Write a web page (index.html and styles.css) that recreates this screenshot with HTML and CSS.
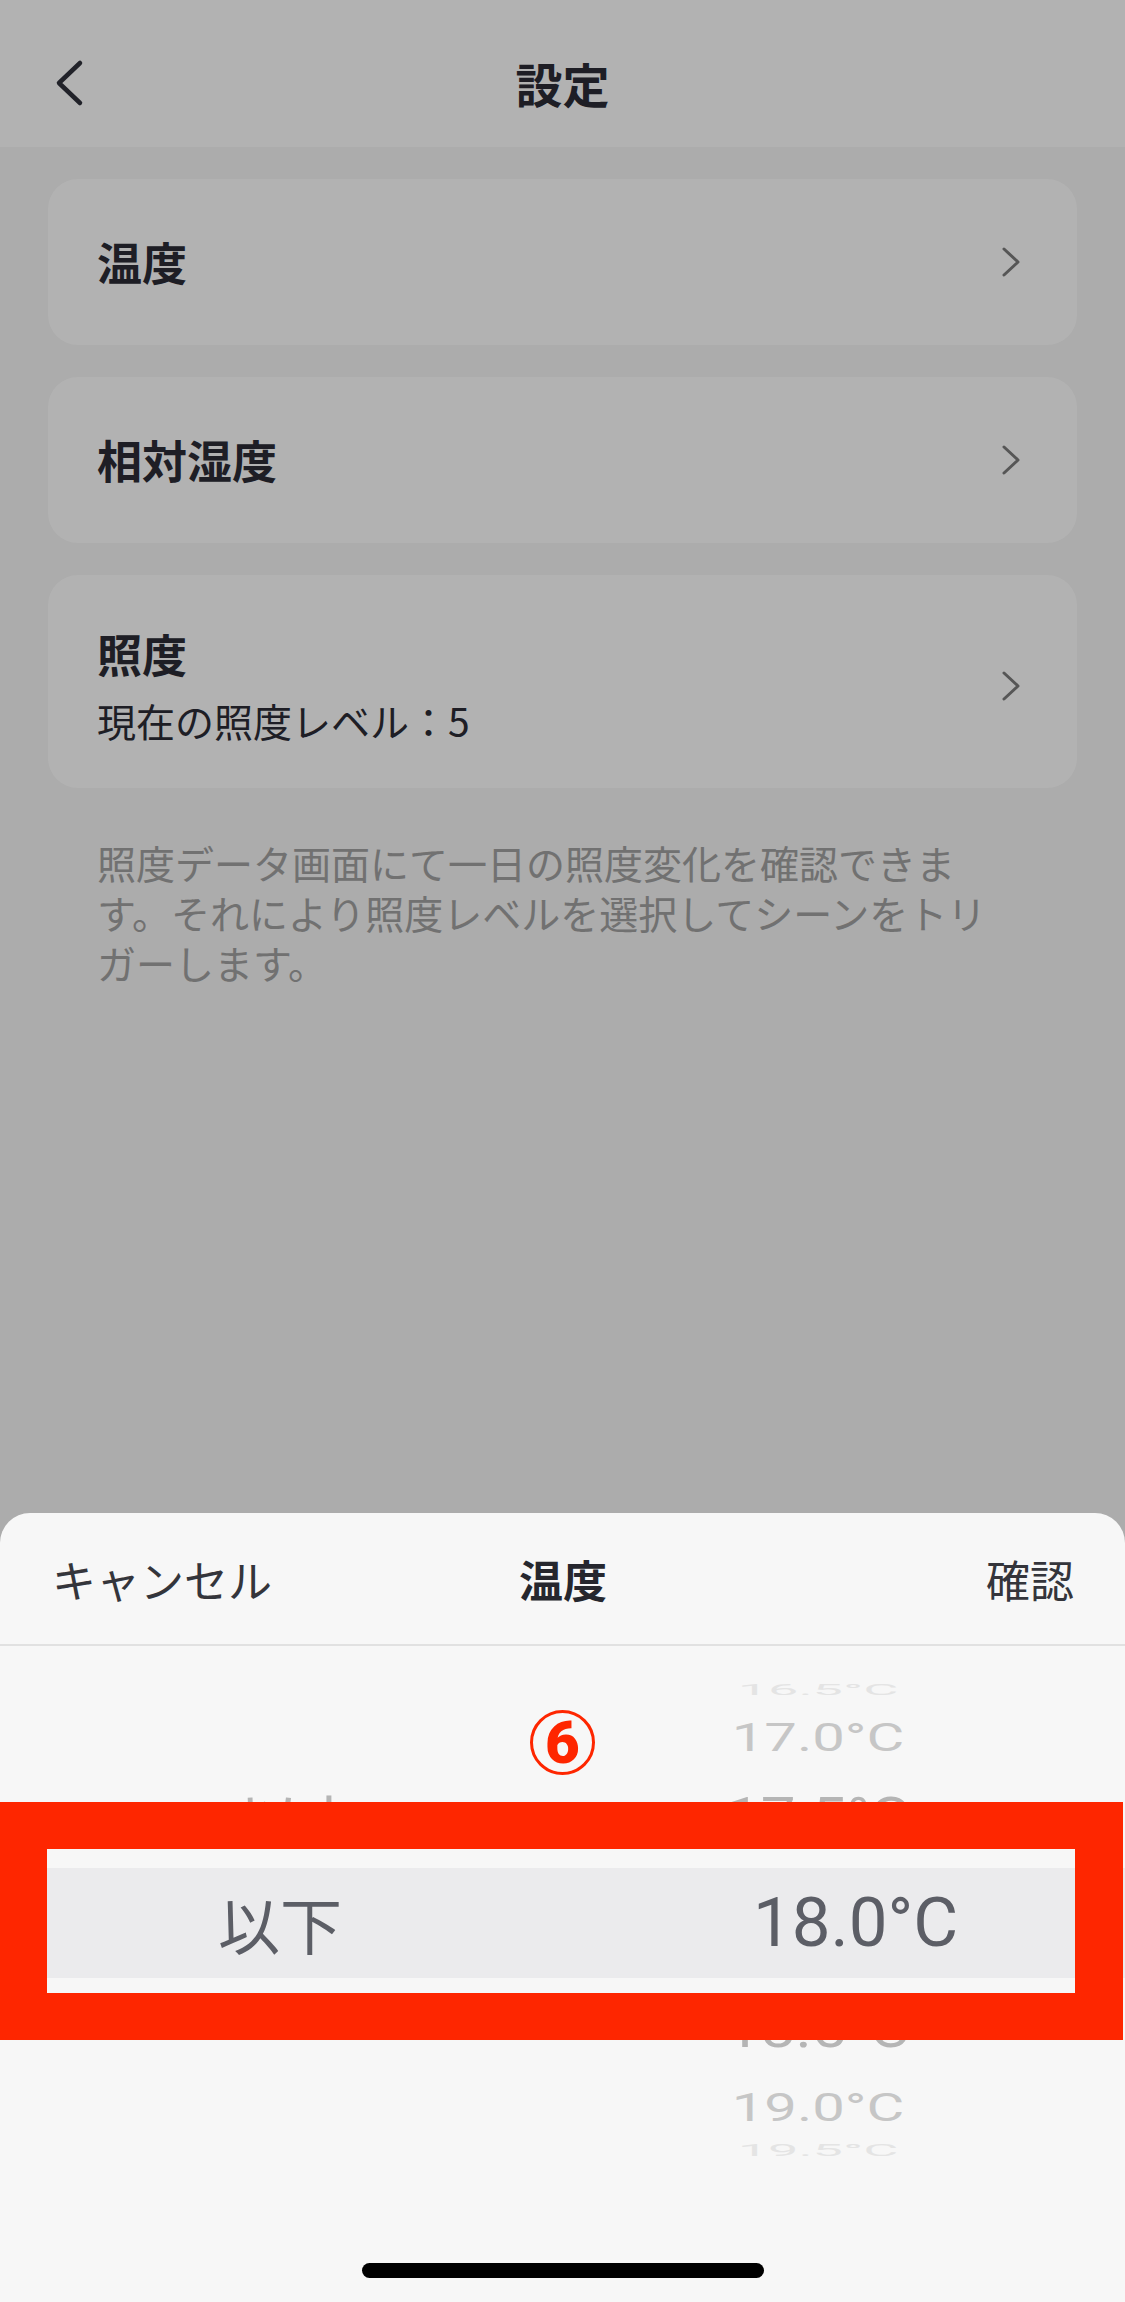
FILE: index.html
```html
<!DOCTYPE html>
<html lang="ja">
<head>
<meta charset="UTF-8">
<meta name="viewport" content="width=device-width, initial-scale=1.0">
<title>設定</title>
<link rel="stylesheet" href="styles.css">
</head>
<body>

<header class="nav">
    <div class="nav-left">
        <svg class="back" width="32" height="48" viewBox="0 0 32 48">
            <polyline points="25,4 4,24 25,44" />
        </svg>
    </div>
    <h1>設定</h1>
    <div></div>
</header>

<div class="container">

    <div class="card">
        <div class="card-text">
            <div class="card-title">温度</div>
        </div>
        <svg class="arrow" width="22" height="32" viewBox="0 0 22 32">
            <polyline points="4,3 18,16 4,29" />
        </svg>
    </div>

    <div class="card">
        <div class="card-text">
            <div class="card-title">相対湿度</div>
        </div>
        <svg class="arrow" width="22" height="32" viewBox="0 0 22 32">
            <polyline points="4,3 18,16 4,29" />
        </svg>
    </div>

    <div class="card tall">
        <div class="card-text">
            <div class="card-title">照度</div>
            <div class="card-sub">現在の照度レベル：5</div>
        </div>
        <svg class="arrow" width="22" height="32" viewBox="0 0 22 32">
            <polyline points="4,3 18,16 4,29" />
        </svg>
    </div>

    <p class="desc">照度データ画面にて一日の照度変化を確認できます。それにより照度レベルを選択してシーンをトリガーします。</p>

</div>

<div class="mask"></div>

<div class="sheet">
    <div class="sheet-head">
        <span class="cancel">キャンセル</span>
        <span class="sheet-title">温度</span>
        <span class="ok">確認</span>
    </div>

    <div class="picker">
        <div class="row r-a">
            <span class="lbl"></span>
            <span class="val"><i>16.5°C</i></span>
        </div>
        <div class="row r-b">
            <span class="lbl"></span>
            <span class="val"><i>17.0°C</i></span>
        </div>
        <div class="row r-c">
            <span class="lbl"><i>以上</i></span>
            <span class="val"><i>17.5°C</i></span>
        </div>
        <div class="row selected">
            <span class="lbl">以下</span>
            <span class="val">18.0°C</span>
        </div>
        <div class="row r-c">
            <span class="lbl"></span>
            <span class="val"><i>18.5°C</i></span>
        </div>
        <div class="row r-f">
            <span class="lbl"></span>
            <span class="val"><i>19.0°C</i></span>
        </div>
        <div class="row r-g">
            <span class="lbl"></span>
            <span class="val"><i>19.5°C</i></span>
        </div>
    </div>

    <div class="home-bar"></div>

    <!-- annotation marks -->
    <div class="mark-num">6</div>
    <div class="mark-box"></div>
</div>

</body>
</html>
```

FILE: styles.css
```css
*{
    margin:0;
    padding:0;
    box-sizing:border-box;
}

body{
    background:#f6f6f6;
    font-family:"Noto Sans CJK JP","Noto Sans",sans-serif;
    min-height:100vh;
}

.nav{
    height:147px;
    padding-top:18px;
    background:white;
    display:grid;
    grid-template-columns:1fr auto 1fr;
    align-items:center;
}

.nav-left{
    padding-left:55px;
    display:flex;
}

.back polyline{
    fill:none;
    stroke:#30323c;
    stroke-width:4.5;
    stroke-linecap:round;
    stroke-linejoin:round;
}

.nav h1{
    font-size:47px;
    font-weight:700;
    color:#2b2c36;
    line-height:1;
}

.container{
    padding:32px 48px 0;
}

.card{
    background:white;
    border-radius:30px;
    min-height:166px;
    margin-bottom:32px;
    padding:0 55px 0 49px;
    display:flex;
    align-items:center;
    justify-content:space-between;
}

.card.tall{
    padding-top:51px;
    padding-bottom:42px;
    min-height:213px;
    margin-bottom:0;
}

.card-title{
    font-size:45px;
    font-weight:700;
    color:#2b2c36;
    line-height:56px;
}

.card-sub{
    font-size:39px;
    color:#2b2c36;
    line-height:52px;
    margin-top:12px;
}

.arrow polyline{
    fill:none;
    stroke:#7c7c7c;
    stroke-width:3;
    stroke-linecap:round;
    stroke-linejoin:round;
}

.desc{
    margin-top:49px;
    padding:0 69px 0 49px;
    font-size:39px;
    line-height:50px;
    color:#a2a2a2;
}

.mask{
    position:fixed;
    inset:0;
    background:rgba(0,0,0,.3);
}

.sheet{
    position:fixed;
    left:0;
    right:0;
    bottom:0;
    height:789px;
    background:#f7f7f7;
    border-radius:30px 30px 0 0;
    display:flex;
    flex-direction:column;
}

.sheet-head{
    height:133px;
    border-bottom:2px solid #e1e1e1;
    padding:0 51px 0 52px;
    display:grid;
    grid-template-columns:1fr auto 1fr;
    align-items:center;
    font-size:44px;
    color:#34353b;
}

.sheet-title{
    font-weight:700;
    color:#26272e;
}

.ok{
    text-align:right;
}

.picker{
    padding-top:26px;
    display:flex;
    flex-direction:column;
}

.row{
    display:grid;
    grid-template-columns:560px 1fr;
    align-items:center;
    text-align:center;
    font-family:Roboto,"Noto Sans CJK JP",sans-serif;
}

.row .val{
    padding-right:49px;
}

.row i{
    display:inline-block;
    font-style:normal;
}

.r-a{
    height:36px;
    line-height:36px;
    font-size:54px;
    color:#e4e4e4;
}

.r-a i{
    transform:scaleY(.28);
}

.r-b,.r-f{
    height:58px;
    line-height:58px;
    font-size:58px;
    color:#c6c6c6;
}

.r-f{
    height:54px;
    line-height:54px;
}

.r-b i,.r-f i{
    transform:scaleY(.68);
}

.r-c{
    height:102px;
    line-height:102px;
    font-size:62px;
    color:#b5b5b5;
}

.r-c i{
    transform:scaleY(.86);
}

.r-c .lbl{
    padding-left:40px;
    font-family:"Noto Sans CJK JP",sans-serif;
}

.r-g{
    height:34px;
    line-height:34px;
    font-size:54px;
    color:#e4e4e4;
}

.r-g i{
    transform:scaleY(.3);
}

.selected{
    height:110px;
    line-height:110px;
    background:#ebebed;
    color:#5c5e66;
    font-size:69px;
}

.selected .lbl{
    font-family:"Noto Sans CJK JP",sans-serif;
    font-size:62px;
}

.selected .val{
    padding:0 0 0 26px;
}

.home-bar{
    margin:auto auto 24px;
    width:402px;
    height:15px;
    border-radius:8px;
    background:#000;
}

.mark-num{
    position:absolute;
    left:530px;
    top:197px;
    width:65px;
    height:65px;
    border:3px solid #fe2600;
    border-radius:50%;
    color:#fe2600;
    font-family:Roboto,sans-serif;
    font-weight:900;
    font-size:60px;
    line-height:59px;
    text-align:center;
}

.mark-box{
    position:absolute;
    left:0;
    top:289px;
    width:1123px;
    height:238px;
    border:47px solid #fe2600;
    border-right-width:48px;
}
```
